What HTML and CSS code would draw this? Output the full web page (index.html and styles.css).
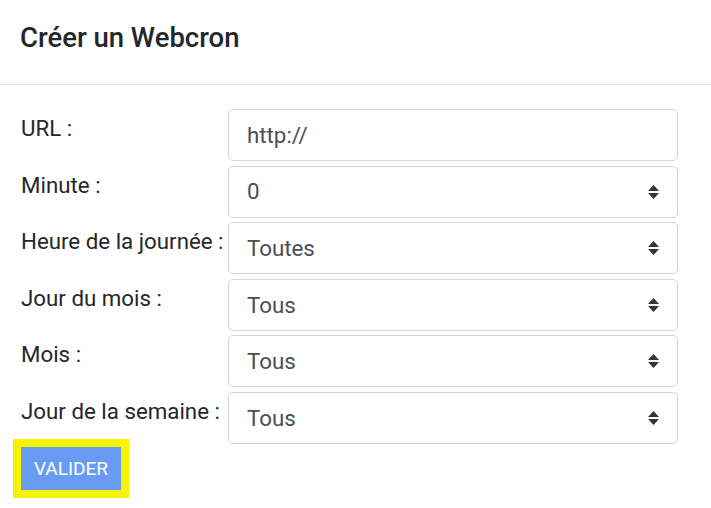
FILE: index.html
```html
<!DOCTYPE html>
<html lang="fr">
<head>
<meta charset="utf-8">
<title>Créer un Webcron</title>
<link rel="stylesheet" href="styles.css">
</head>
<body>
<div class="modal">
  <div class="modal-header">
    <h5 class="modal-title">Créer un Webcron</h5>
  </div>
  <div class="modal-body">
    <form class="form">
      <div class="row">
        <label class="label">URL :</label>
        <div class="control"><span class="value">http://</span></div>
      </div>
      <div class="row">
        <label class="label">Minute :</label>
        <div class="control select"><span class="value">0</span><svg class="caret" viewBox="0 0 12 16"><path d="M6 1 L11.5 7 H0.5 Z M0.5 9 H11.5 L6 15 Z"/></svg></div>
      </div>
      <div class="row">
        <label class="label">Heure de la journée :</label>
        <div class="control select"><span class="value">Toutes</span><svg class="caret" viewBox="0 0 12 16"><path d="M6 1 L11.5 7 H0.5 Z M0.5 9 H11.5 L6 15 Z"/></svg></div>
      </div>
      <div class="row">
        <label class="label">Jour du mois :</label>
        <div class="control select"><span class="value">Tous</span><svg class="caret" viewBox="0 0 12 16"><path d="M6 1 L11.5 7 H0.5 Z M0.5 9 H11.5 L6 15 Z"/></svg></div>
      </div>
      <div class="row">
        <label class="label">Mois :</label>
        <div class="control select"><span class="value">Tous</span><svg class="caret" viewBox="0 0 12 16"><path d="M6 1 L11.5 7 H0.5 Z M0.5 9 H11.5 L6 15 Z"/></svg></div>
      </div>
      <div class="row">
        <label class="label">Jour de la semaine :</label>
        <div class="control select"><span class="value">Tous</span><svg class="caret" viewBox="0 0 12 16"><path d="M6 1 L11.5 7 H0.5 Z M0.5 9 H11.5 L6 15 Z"/></svg></div>
      </div>
    </form>
    <button class="btn" type="button">VALIDER</button>
  </div>
</div>
</body>
</html>
```

FILE: styles.css
```css
* { box-sizing: border-box; }
html, body { margin: 0; padding: 0; background: #fff; }
body {
  font-family: Roboto, "Liberation Sans", Arial, sans-serif;
  color: #212529;
  width: 711px;
  height: 508px;
  overflow: hidden;
}
.modal-header {
  height: 85px;
  padding: 21px 20px 0 20px;
  border-bottom: 1px solid #e2e4e6;
}
.modal-title {
  margin: 0;
  font-size: 27.5px;
  font-weight: 500;
  line-height: 33px;
  color: #24272b;
}
.modal-body {
  padding: 24px 20px 0 21px;
}
.form {
  display: flex;
  flex-direction: column;
  gap: 4.6px;
}
.row {
  display: flex;
  align-items: flex-start;
}
.label {
  width: 207px;
  font-size: 22.3px;
  line-height: 30px;
  padding-top: 4px;
  color: #24272b;
  white-space: nowrap;
}
.control {
  width: 450px;
  height: 52px;
  border: 1px solid #d3d6da;
  border-radius: 5px;
  display: flex;
  align-items: center;
  justify-content: space-between;
  padding: 0 17px 0 18px;
  font-size: 22.3px;
  color: #4a4f55;
}
.value { line-height: 1; }
.caret {
  width: 13px;
  height: 16px;
  fill: #333639;
}
.btn {
  margin-top: 3px;
  margin-left: 0;
  width: 100px;
  height: 43px;
  border: none;
  border-radius: 0;
  background: #6a9bf2;
  color: #fff;
  font-family: Roboto, "Liberation Sans", Arial, sans-serif;
  font-size: 19px;
  font-weight: 400;
  outline: 8px solid #f7f400;
  padding: 0;
}
```
